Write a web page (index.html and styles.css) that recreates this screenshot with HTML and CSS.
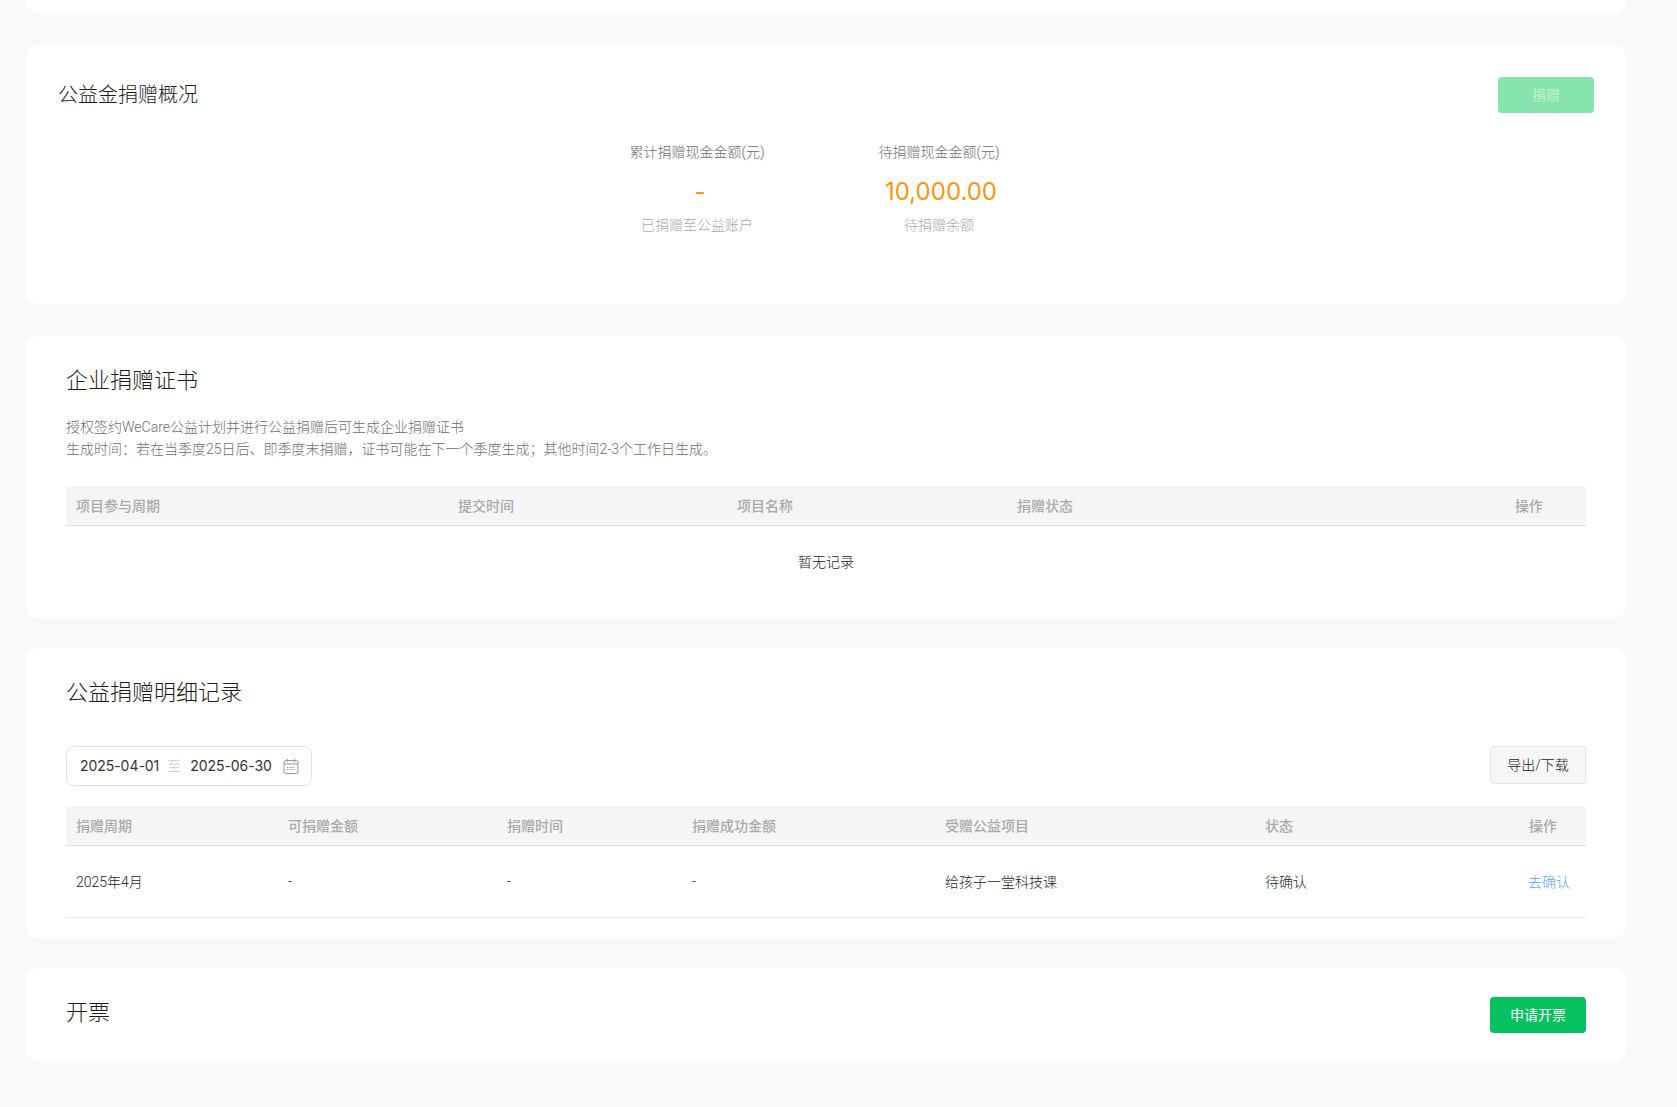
FILE: index.html
```html
<!DOCTYPE html>
<html lang="zh-CN">
<head>
<meta charset="utf-8">
<title>公益金捐赠概况</title>
<link rel="stylesheet" href="styles.css">
</head>
<body>
<main class="page">
  <section class="card card-stub"></section>

  <section class="card card-overview">
    <div class="head">
      <h2 class="title title-small">公益金捐赠概况</h2>
      <button class="btn btn-disabled" type="button">捐赠</button>
    </div>
    <div class="stats">
      <div class="stat">
        <div class="stat-label">累计捐赠现金金额(元)</div>
        <div class="stat-value stat-value-dash">-</div>
        <div class="stat-sub">已捐赠至公益账户</div>
      </div>
      <div class="stat">
        <div class="stat-label">待捐赠现金金额(元)</div>
        <div class="stat-value">10,000.00</div>
        <div class="stat-sub">待捐赠余额</div>
      </div>
    </div>
  </section>

  <section class="card card-cert">
    <h2 class="title">企业捐赠证书</h2>
    <p class="desc">授权签约WeCare公益计划并进行公益捐赠后可生成企业捐赠证书<br>生成时间：若在当季度25日后、即季度末捐赠，证书可能在下一个季度生成；其他时间2-3个工作日生成。</p>
    <table class="table table-cert">
      <colgroup><col class="c1"><col class="c2"><col class="c3"><col class="c4"><col class="c5"></colgroup>
      <thead>
        <tr><th>项目参与周期</th><th>提交时间</th><th>项目名称</th><th>捐赠状态</th><th>操作</th></tr>
      </thead>
      <tbody>
        <tr><td class="empty" colspan="5">暂无记录</td></tr>
      </tbody>
    </table>
  </section>

  <section class="card card-detail">
    <h2 class="title">公益捐赠明细记录</h2>
    <div class="toolbar">
      <div class="range">
        <span class="range-date">2025-04-01</span>
        <span class="range-sep">至</span>
        <span class="range-date">2025-06-30</span>
        <svg class="range-icon" width="16" height="16" viewBox="0 0 16 16" fill="none" aria-hidden="true">
          <rect x="1" y="2.5" width="14" height="13" rx="1.5" stroke="#999" stroke-width="1"/>
          <path d="M1 6h14M4.5 1v3M11.5 1v3" stroke="#999" stroke-width="1"/>
          <path d="M4 9.5h8M4 11.5h8" stroke="#999" stroke-width="1" stroke-dasharray="1 .6"/>
        </svg>
      </div>
      <button class="btn btn-plain" type="button">导出/下载</button>
    </div>
    <table class="table table-detail">
      <colgroup><col class="d1"><col class="d2"><col class="d3"><col class="d4"><col class="d5"><col class="d6"><col class="d7"></colgroup>
      <thead>
        <tr><th>捐赠周期</th><th>可捐赠金额</th><th>捐赠时间</th><th>捐赠成功金额</th><th>受赠公益项目</th><th>状态</th><th>操作</th></tr>
      </thead>
      <tbody>
        <tr><td>2025年4月</td><td>-</td><td>-</td><td>-</td><td>给孩子一堂科技课</td><td>待确认</td><td><a class="link" href="#">去确认</a></td></tr>
      </tbody>
    </table>
  </section>

  <section class="card card-invoice">
    <h2 class="title title-invoice">开票</h2>
    <button class="btn btn-primary" type="button">申请开票</button>
  </section>
</main>
</body>
</html>
```
FILE: styles.css
```css
* { box-sizing: border-box; }
html, body { margin: 0; padding: 0; }
body {
  background: #f8f9fb;
  color: #222;
  font-family: "Roboto", "Noto Sans CJK SC", sans-serif;
  font-size: 14px;
  font-weight: 300;
  height: 1107px;
  overflow: hidden;
}
.page { display: flex; flex-direction: column; padding: 0 51px 0 26px; }
.card { background: #fff; border-radius: 12px; }
.card-stub { height: 13px; border-radius: 0 0 12px 12px; }
.card-overview { margin-top: 32px; height: 259px; padding: 32px; }
.card-cert { margin-top: 32px; height: 282px; padding: 30px 40px; }
.card-detail { margin-top: 30px; height: 290px; padding: 30px 40px; }
.card-invoice { margin-top: 30px; height: 93px; padding: 29px 40px; display: flex; justify-content: space-between; align-items: center; }

.head { display: flex; justify-content: space-between; align-items: center; height: 36px; }
.title { margin: 0; font-weight: 300; font-size: 22px; line-height: 30px; color: #1c1c1c; }
.title-small { font-size: 20px; }
.title-invoice { margin-top: -3px; }

.btn { width: 96px; height: 36px; border-radius: 4px; border: 0; font: inherit; font-size: 14px; padding: 0 0 2px; }
.btn-disabled { background: #87e4ad; color: #c4efd5; font-weight: 400; }
.btn-primary { background: #07c160; color: #fff; font-weight: 400; }
.btn-plain { height: 38px; background: #f5f6f7; border: 1px solid #e3e4e6; color: #222; }

.stats { display: flex; justify-content: center; gap: 114px; padding-right: 23px; margin-top: 28px; }
.stat { display: flex; flex-direction: column; align-items: center; }
.stat-label { line-height: 22px; color: #6e6e6e; }
.stat-value { margin: 12px 0 0 4px; line-height: 34px; font-family: "Inter", sans-serif; font-size: 24px; font-weight: 400; color: #fa9514; }
.stat-value-dash { margin-left: 6px; }
.stat-sub { margin-top: 5px; line-height: 22px; color: #aaa; }

.desc { margin: 20px 0 26px; line-height: 22px; color: #6e6e6e; }

.table { width: 100%; border-collapse: separate; border-spacing: 0; table-layout: fixed; }
.table th { height: 40px; padding: 0 0 2px 10px; background: #f4f5f7; border-bottom: 1px solid #dfe0e3; text-align: left; font-weight: 500; color: #aaa; }
.table td { padding: 0 0 1px 10px; text-align: left; color: #222; }
.table-cert .c1 { width: 382px; }
.table-cert .c2 { width: 279px; }
.table-cert .c3 { width: 280px; }
.table-cert .c4 { width: 498px; }
.table-cert .empty { height: 72px; padding: 0 0 2px; text-align: center; }

.toolbar { display: flex; justify-content: space-between; align-items: flex-start; margin-top: 38px; margin-bottom: 20px; }
.range { display: flex; align-items: center; width: 246px; height: 40px; padding: 0 12px 2px 13px; border: 1px solid #e3e4e6; border-radius: 8px; font-family: "Inter", "Noto Sans CJK SC", sans-serif; font-weight: 400; }
.range-date { color: #333; letter-spacing: -0.05px; }
.range-sep { margin: 0 9px 0 8px; color: #ccc; font-weight: 300; }
.range-icon { margin: 2px 0 0 auto; }

.table-detail .d1 { width: 212px; }
.table-detail .d2 { width: 219px; }
.table-detail .d3 { width: 185px; }
.table-detail .d4 { width: 253px; }
.table-detail .d5 { width: 320px; }
.table-detail .d6 { width: 264px; }
.table-detail td { height: 72px; border-bottom: 1px solid #e5e6e8; }
.link { margin-left: -1px; color: #5ea2ee; text-decoration: none; }
```
